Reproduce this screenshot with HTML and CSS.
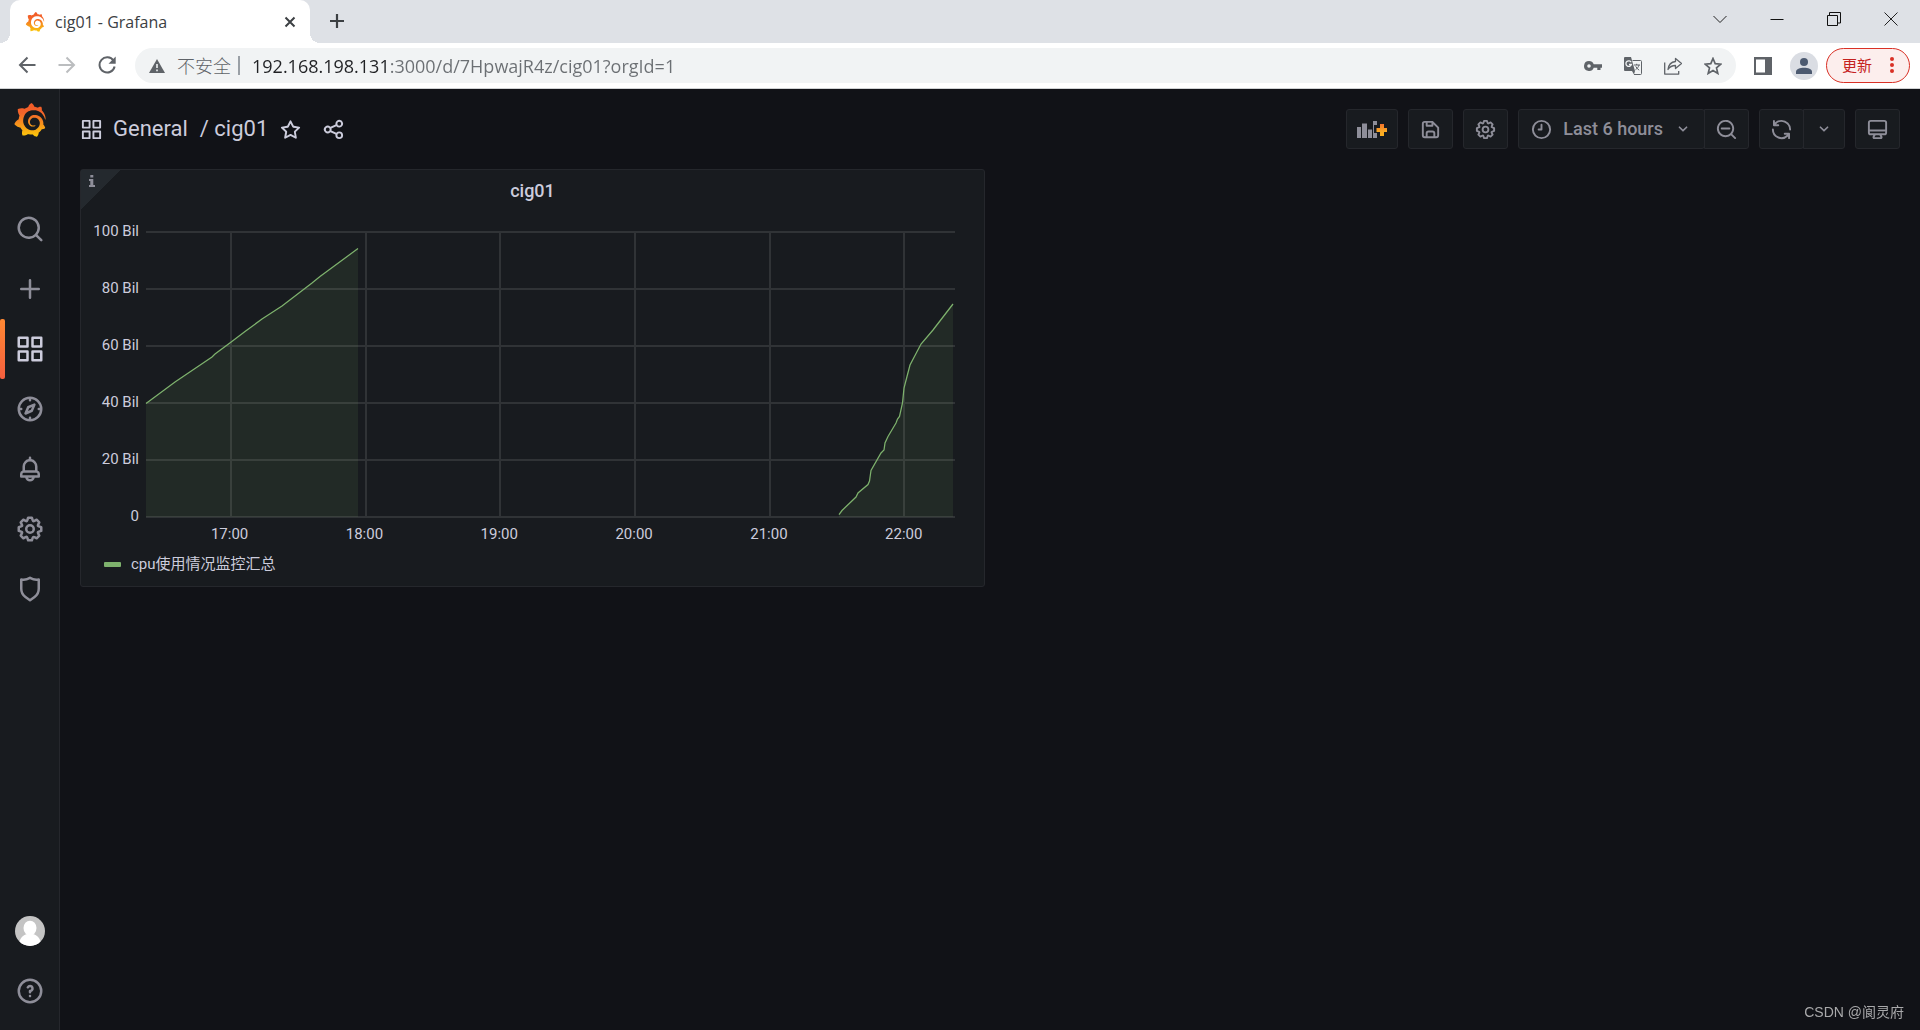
FILE: index.html
```html
<!DOCTYPE html>
<html lang="zh-CN">
<head>
<meta charset="utf-8">
<title>cig01 - Grafana</title>
<link rel="stylesheet" href="styles.css">
</head>
<body>
<svg class="defs" aria-hidden="true">
  <defs>
    <linearGradient id="brand" x1="0" y1="0" x2="0" y2="1">
      <stop offset="0" stop-color="#f05a28"/><stop offset=".3" stop-color="#f3642a"/><stop offset="1" stop-color="#fbca0a"/>
    </linearGradient>
    <symbol id="logo" viewBox="0 0 351 365"><path fill="url(#brand)" d="M342,161.2c-0.6-6.1-1.6-13.1-3.6-20.9c-2-7.7-5-16.2-9.4-25c-4.4-8.8-10.1-17.9-17.5-26.8c-2.9-3.5-6.1-6.9-9.5-10.2c5.1-20.3-6.2-37.9-6.2-37.9c-19.5-1.2-31.9,6.1-36.5,9.4c-0.8-0.3-1.5-0.7-2.3-1c-3.3-1.3-6.7-2.6-10.3-3.7c-3.5-1.1-7.1-2.1-10.8-3c-3.7-0.9-7.4-1.6-11.2-2.2c-0.7-0.1-1.3-0.2-2-0.3c-8.5-27.2-32.9-38.6-32.9-38.6c-27.3,17.3-32.4,41.5-32.4,41.5s-0.1,0.5-0.3,1.4c-1.5,0.4-3,0.9-4.5,1.3c-2.1,0.6-4.2,1.4-6.2,2.2c-2.1,0.8-4.1,1.6-6.2,2.5c-4.1,1.8-8.2,3.8-12.2,6c-3.9,2.2-7.7,4.6-11.4,7.1c-0.5-0.2-1-0.4-1-0.4c-37.8-14.4-71.3,2.9-71.3,2.9c-3.1,40.2,15.1,65.5,18.7,70.1c-0.9,2.5-1.7,5-2.5,7.5c-2.8,9.1-4.9,18.4-6.2,28.1c-0.2,1.4-0.4,2.8-0.5,4.2C18.8,192.7,8.5,228,8.5,228c29.1,33.5,63.1,35.6,63.1,35.6c0,0,0.1-0.1,0.1-0.1c4.3,7.7,9.3,15,14.9,21.9c2.4,2.9,4.8,5.6,7.4,8.3c-10.6,30.4,1.5,55.6,1.5,55.6c32.4,1.2,53.7-14.2,58.2-17.7c3.2,1.1,6.5,2.1,9.8,2.9c10,2.6,20.2,4.1,30.4,4.5c2.5,0.1,5.1,0.2,7.6,0.1l1.2,0l0.8,0l1.6,0l1.6-0.1l0,0.1c15.3,21.8,42.1,24.9,42.1,24.9c19.1-20.1,20.2-40.1,20.2-44.4l0,0c0,0,0-0.1,0-0.3c0-0.4,0-0.6,0-0.6l0,0c0-0.3,0-0.6,0-0.9c4-2.8,7.8-5.8,11.4-9.1c7.6-6.9,14.3-14.8,19.9-23.3c0.5-0.8,1-1.6,1.5-2.4c21.6,1.2,36.9-13.4,36.9-13.4c-3.6-22.5-16.4-33.5-19.1-35.6l0,0c0,0-0.1-0.1-0.3-0.2c-0.2-0.1-0.2-0.2-0.2-0.2c0,0,0,0,0,0c-0.1-0.1-0.3-0.2-0.5-0.3c0.1-1.4,0.2-2.7,0.3-4.1c0.2-2.4,0.2-4.9,0.2-7.3l0-1.8l0-0.9l0-0.5c0-0.6,0-0.4,0-0.6l-0.1-1.5l-0.1-2c0-0.7-0.1-1.3-0.2-1.9c-0.1-0.6-0.1-1.3-0.2-1.9l-0.2-1.9l-0.3-1.9c-0.4-2.5-0.8-4.9-1.4-7.4c-2.3-9.7-6.1-18.9-11-27.2c-5-8.3-11.2-15.6-18.3-21.8c-7-6.2-14.9-11.2-23.1-14.9c-8.3-3.7-16.9-6.1-25.5-7.2c-4.3-0.6-8.6-0.8-12.9-0.7l-1.6,0l-0.4,0c-0.1,0-0.6,0-0.5,0l-0.7,0l-1.6,0.1c-0.6,0-1.2,0.1-1.7,0.1c-2.2,0.2-4.4,0.5-6.5,0.9c-8.6,1.6-16.7,4.7-23.8,9c-7.1,4.3-13.3,9.6-18.3,15.6c-5,6-8.9,12.7-11.6,19.6c-2.7,6.9-4.2,14.1-4.6,21c-0.1,1.7-0.1,3.5-0.1,5.2c0,0.4,0,0.9,0,1.3l0.1,1.4c0.1,0.8,0.1,1.7,0.2,2.5c0.3,3.5,1,6.9,1.9,10.1c1.9,6.5,4.9,12.4,8.6,17.4c3.7,5,8.2,9.1,12.9,12.4c4.7,3.2,9.8,5.5,14.8,7c5,1.5,10,2.1,14.7,2.1c0.6,0,1.2,0,1.7,0c0.3,0,0.6,0,0.9,0c0.3,0,0.6,0,0.9-0.1c0.5,0,1-0.1,1.5-0.1c0.1,0,0.3,0,0.4-0.1l0.5-0.1c0.3,0,0.6-0.1,0.9-0.1c0.6-0.1,1.1-0.2,1.7-0.3c0.6-0.1,1.1-0.2,1.6-0.4c1.1-0.2,2.1-0.6,3.1-0.9c2-0.7,4-1.5,5.7-2.4c1.8-0.9,3.4-2,5-3c0.4-0.3,0.9-0.6,1.3-1c1.6-1.3,1.9-3.7,0.6-5.3c-1.1-1.4-3.1-1.8-4.7-0.9c-0.4,0.2-0.8,0.4-1.2,0.6c-1.4,0.7-2.8,1.3-4.3,1.8c-1.5,0.5-3.1,0.9-4.7,1.2c-0.8,0.1-1.6,0.2-2.5,0.3c-0.4,0-0.8,0.1-1.3,0.1c-0.4,0-0.9,0-1.2,0c-0.4,0-0.8,0-1.2,0c-0.5,0-1,0-1.5-0.1l-0.3,0l-0.3,0c-0.2,0-0.5,0-0.7-0.1c-0.5-0.1-0.9-0.1-1.4-0.2c-3.7-0.5-7.4-1.6-10.9-3.2c-3.6-1.6-7-3.8-10.1-6.6c-3.1-2.8-5.8-6.1-7.9-9.9c-2.1-3.8-3.6-8-4.3-12.4c-0.3-2.2-0.5-4.5-0.4-6.7c0-0.6,0.1-1.2,0.1-1.8l0-0.3l0-0.5c0-0.3,0.1-0.6,0.1-0.9c0.1-1.2,0.3-2.4,0.5-3.6c1.7-9.6,6.5-19,13.9-26.1c1.9-1.8,3.9-3.4,6-4.9c2.1-1.5,4.4-2.8,6.8-3.9c2.4-1.1,4.8-2,7.4-2.7c2.5-0.7,5.1-1.1,7.8-1.4c1.3-0.1,2.6-0.2,4-0.2c0.4,0,0.6,0,0.9,0l1.1,0l0.7,0l0.4,0l1.1,0.1c2.9,0.2,5.7,0.6,8.5,1.3c5.6,1.2,11.1,3.3,16.2,6.1c10.2,5.7,18.9,14.5,24.2,25.1c2.7,5.3,4.6,11,5.5,16.9c0.2,1.5,0.4,3,0.5,4.5l0.1,1.1l0.1,1.1c0,0.4,0,0.8,0,1.1c0,0.4,0,0.8,0,1.1l0,1l0,1.1c0,0.7-0.1,1.9-0.1,2.6c-0.1,1.6-0.3,3.3-0.5,4.9c-0.2,1.6-0.5,3.2-0.8,4.8c-0.3,1.6-0.7,3.2-1.1,4.7c-0.8,3.1-1.8,6.2-3,9.3c-2.4,6-5.6,11.8-9.4,17.1c-7.7,10.6-18.2,19.2-30.2,24.7c-6,2.7-12.3,4.7-18.8,5.7c-3.2,0.6-6.5,0.9-9.8,1l-0.6,0l-0.5,0l-1.1,0l-1.6,0l-0.8,0l-0.4,0c-1.8,0-3.5-0.1-5.3-0.3c-7-0.5-13.9-1.8-20.7-3.7c-6.7-1.9-13.2-4.6-19.4-7.8c-12.3-6.6-23.4-15.6-32-26.5c-4.3-5.4-8.1-11.3-11.2-17.4c-3.1-6.1-5.6-12.6-7.4-19.1c-1.8-6.6-2.9-13.3-3.4-20.1l-0.1-1.3l0-0.3l0-0.3l0-0.6l0-1.1l0-0.3l0-0.4l0-0.8l0-1.6l0-0.3l0-0.7c0-0.8,0-1.7,0-2.5c0.1-3.3,0.4-6.8,0.8-10.2c0.4-3.4,1-6.9,1.7-10.3c0.7-3.4,1.5-6.8,2.5-10.2c1.9-6.7,4.3-13.2,7.1-19.3c5.7-12.2,13.1-23.1,22-31.8c2.2-2.2,4.5-4.2,6.9-6.2c2.4-1.9,4.9-3.7,7.5-5.4c2.5-1.7,5.2-3.2,7.9-4.6c1.3-0.7,2.7-1.4,4.1-2c0.7-0.3,1.4-0.6,2.1-0.9c0.7-0.3,1.4-0.6,2.1-0.9c2.8-1.2,5.7-2.2,8.7-3.1c0.7-0.2,1.5-0.4,2.2-0.7c0.7-0.2,1.5-0.4,2.2-0.6c1.5-0.4,3-0.8,4.5-1.1c0.7-0.2,1.5-0.3,2.3-0.5c0.8-0.2,1.5-0.3,2.3-0.5c0.8-0.1,1.5-0.3,2.3-0.4l1.1-0.2l1.2-0.2c0.8-0.1,1.5-0.2,2.3-0.3c0.9-0.1,1.7-0.2,2.6-0.3c0.7-0.1,1.9-0.2,2.6-0.3c0.5-0.1,1.1-0.1,1.6-0.2l1.1-0.1l0.5-0.1l0.6,0c0.9-0.1,1.7-0.1,2.6-0.2l1.3-0.1l0.4,0l0.6,0c0.7,0,1.5-0.1,2.2-0.1c2.9-0.1,5.9-0.1,8.8,0c5.8,0.2,11.5,0.9,17,1.9c11.1,2.1,21.5,5.6,31,10.3c9.5,4.6,17.9,10.3,25.3,16.5c0.5,0.4,0.9,0.8,1.4,1.2c0.4,0.4,0.9,0.8,1.3,1.2c0.9,0.8,1.7,1.6,2.6,2.4c0.9,0.8,1.7,1.6,2.5,2.4c0.8,0.8,1.6,1.6,2.4,2.5c3.1,3.3,6,6.6,8.6,10c5.2,6.7,9.4,13.5,12.7,19.9c0.2,0.4,0.4,0.8,0.6,1.2c0.2,0.4,0.4,0.8,0.6,1.2c0.4,0.8,0.8,1.6,1.1,2.4c0.4,0.8,0.7,1.5,1.1,2.3c0.3,0.8,0.7,1.5,1,2.3c1.2,3,2.4,5.9,3.3,8.6c1.5,4.4,2.6,8.3,3.5,11.7c0.3,1.4,1.6,2.3,3,2.1c1.5-0.1,2.6-1.3,2.6-2.8C342.6,170.4,342.5,166.1,342,161.2z"/></symbol>
    <symbol id="apps" viewBox="0 0 24 24"><path d="M10,13H3a1,1,0,0,0-1,1v7a1,1,0,0,0,1,1h7a1,1,0,0,0,1-1V14A1,1,0,0,0,10,13ZM9,20H4V15H9ZM21,2H14a1,1,0,0,0-1,1v7a1,1,0,0,0,1,1h7a1,1,0,0,0,1-1V3A1,1,0,0,0,21,2ZM20,9H15V4h5Zm1,4H14a1,1,0,0,0-1,1v7a1,1,0,0,0,1,1h7a1,1,0,0,0,1-1V14A1,1,0,0,0,21,13Zm-1,7H15V15h5ZM10,2H3A1,1,0,0,0,2,3v7a1,1,0,0,0,1,1h7a1,1,0,0,0,1-1V3A1,1,0,0,0,10,2ZM9,9H4V4H9Z"/></symbol>
    <symbol id="cog" viewBox="0 0 24 24"><path d="M21.32,9.55l-1.89-.63.89-1.78A1,1,0,0,0,20.13,6L18,3.87a1,1,0,0,0-1.15-.19l-1.78.89-.63-1.89A1,1,0,0,0,13.5,2h-3a1,1,0,0,0-.95.68L8.92,4.57,7.14,3.68A1,1,0,0,0,6,3.87L3.87,6a1,1,0,0,0-.19,1.15l.89,1.78-1.89.63A1,1,0,0,0,2,10.5v3a1,1,0,0,0,.68.95l1.89.63-.89,1.78A1,1,0,0,0,3.87,18L6,20.13a1,1,0,0,0,1.15.19l1.78-.89.63,1.89a1,1,0,0,0,.95.68h3a1,1,0,0,0,.95-.68l.63-1.89,1.78.89A1,1,0,0,0,18,20.13L20.13,18a1,1,0,0,0,.19-1.15l-.89-1.78,1.89-.63A1,1,0,0,0,22,13.5v-3A1,1,0,0,0,21.32,9.55ZM20,12.78l-1.2.4A2,2,0,0,0,17.64,16l.57,1.14-1.1,1.1L16,17.64a2,2,0,0,0-2.79,1.16l-.4,1.2H11.22l-.4-1.2A2,2,0,0,0,8,17.64l-1.14.57-1.1-1.1L6.36,16A2,2,0,0,0,5.2,13.18L4,12.78V11.22l1.2-.4A2,2,0,0,0,6.36,8L5.79,6.89l1.1-1.1L8,6.36A2,2,0,0,0,10.82,5.2l.4-1.2h1.56l.4,1.2A2,2,0,0,0,16,6.36l1.14-.57,1.1,1.1L17.64,8a2,2,0,0,0,1.16,2.79l1.2.4ZM12,8a4,4,0,1,0,4,4A4,4,0,0,0,12,8Zm0,6a2,2,0,1,1,2-2A2,2,0,0,1,12,14Z"/></symbol>
    <symbol id="angle" viewBox="0 0 24 24"><path d="M17,9.17a1,1,0,0,0-1.41,0L12,12.71,8.46,9.17a1,1,0,0,0-1.41,0,1,1,0,0,0,0,1.42l4.24,4.24a1,1,0,0,0,1.42,0L17,10.59A1,1,0,0,0,17,9.17Z"/></symbol>
  </defs>
</svg>

<header class="browser">
  <div class="tabstrip">
    <div class="tab">
      <svg class="favicon"><use href="#logo"/></svg>
      <span class="tab-title">cig01 - Grafana</span>
      <button class="plain tab-close" aria-label="Close tab"><svg width="12" height="12" viewBox="0 0 12 12"><path d="M1.500 1.500l9 9M10.500 1.500l-9 9" fill="none" stroke="#3c4043" stroke-width="2"/></svg></button>
    </div>
    <button class="plain newtab" aria-label="New tab"><svg width="16" height="16" viewBox="0 0 16 16"><path d="M8 1v14M1 8h14" fill="none" stroke="#3c4043" stroke-width="2.200"/></svg></button>
    <div class="window-controls">
      <button class="plain" aria-label="Search tabs"><svg width="14" height="14" viewBox="0 0 14 14"><path d="M.500 4l6.500 6.500L13.500 4" fill="none" stroke="#222"/></svg></button>
      <button class="plain" aria-label="Minimize"><svg width="14" height="14" viewBox="0 0 14 14"><path d="M.500 7.500h13" stroke="#111"/></svg></button>
      <button class="plain" aria-label="Restore"><svg width="14" height="14" viewBox="0 0 14 14"><path d="M.500 3.500h10v10h-10zM2.500 3V.500h11v10.500H11" fill="none" stroke="#111"/></svg></button>
      <button class="plain" aria-label="Close"><svg width="14" height="14" viewBox="0 0 14 14"><path d="M.500.500l13 13M13.500.500l-13 13" fill="none" stroke="#222"/></svg></button>
    </div>
  </div>
  <div class="navbar">
    <div class="nav-buttons">
      <button class="plain" aria-label="Back"><svg width="18" height="18" viewBox="0 0 18 18"><path d="M17.500 9H2M9.500 1.500L2 9l7.500 7.500" fill="none" stroke="#5f6368" stroke-width="2"/></svg></button>
      <button class="plain" aria-label="Forward"><svg width="18" height="18" viewBox="0 0 18 18"><path d="M.500 9H16M8.500 1.500L16 9l-7.500 7.500" fill="none" stroke="#bbbdbf" stroke-width="2"/></svg></button>
      <button class="plain" aria-label="Reload"><svg width="18" height="18" viewBox="0 0 18 18"><path d="M15.500 4.700A7.600 7.600 0 1 0 16.600 10.500" fill="none" stroke="#5f6368" stroke-width="2"/><path d="M17.700.500v7.200h-7.200z" fill="#5f6368"/></svg></button>
    </div>
    <div class="omnibox">
      <svg class="warn" width="16" height="14" viewBox="0 0 16 14"><path d="M8 0l8 14H0z" fill="#5f6368"/><path d="M8 5v4M8 10.500v1.700" stroke="#f1f3f4" stroke-width="1.600"/></svg>
      <label class="insecure" for="url">不安全</label>
      <span class="divider"></span>
      <input class="url" id="url" type="text" value="192.168.198.131:3000/d/7HpwajR4z/cig01?orgId=1">
      <button class="plain omni-btn" aria-label="Passwords"><svg width="18" height="12" viewBox="0 0 18 12"><path fill="#5f6368" fill-rule="evenodd" d="M5 1a5 5 0 0 1 4.700 3.200H18v3.600h-1.500V10h-3.200V7.800H9.700A5 5 0 1 1 5 1zm0 3.200a1.800 1.800 0 1 0 0 3.600 1.800 1.800 0 0 0 0-3.600z"/></svg></button>
      <button class="plain omni-btn" aria-label="Translate"><svg width="18" height="18" viewBox="0 0 18 18"><path d="M8.500 3.500h8a1 1 0 0 1 1 1v12a1 1 0 0 1-1 1h-6.500" fill="#f1f3f4" stroke="#5f6368"/><path d="M1 0h6l4 14H1a1 1 0 0 1-1-1V1a1 1 0 0 1 1-1z" fill="#5f6368"/><path d="M8 14l2 3.500 1-3.500z" fill="#5f6368"/><path d="M7.200 5.300A2.800 2.800 0 1 0 7.400 7.500H5" fill="none" stroke="#f1f3f4" stroke-width="1.300"/><path d="M10 8h6M12.700 6.800V8M15 8c-.5 2-1.800 3.600-3.500 4.700M11.700 9.300c.7 1.500 2 2.900 3.500 3.900" fill="none" stroke="#5f6368"/></svg></button>
      <button class="plain omni-btn" aria-label="Share"><svg width="18" height="18" viewBox="0 0 18 18"><path d="M.700 5.500v11.600h14v-3M11.500 1.500l6 5-6 5V8.500C8 8.500 5.500 10 4 12.500 4.500 8 7.500 5 11.500 4.500z" fill="none" stroke="#5f6368" stroke-width="1.300" stroke-linejoin="round"/></svg></button>
      <button class="plain omni-btn" aria-label="Bookmark"><svg width="18" height="18" viewBox="0 0 18 18"><path d="M9 1.500l2.200 5.200 5.600.5-4.300 3.700 1.300 5.500L9 13.500l-4.800 2.900 1.300-5.500L1.200 7.200l5.600-.5z" fill="none" stroke="#5f6368" stroke-width="1.700"/></svg></button>
    </div>
    <button class="plain side-panel" aria-label="Side panel"><svg width="18" height="18" viewBox="0 0 18 18"><path fill="#5f6368" fill-rule="evenodd" d="M0 0h18v18H0zM2 2.500v13h9v-13z"/></svg></button>
    <button class="plain profile" aria-label="Profile"><svg width="16" height="16" viewBox="0 0 16 16"><g fill="#4c5a70"><circle cx="8" cy="4" r="4"/><path d="M0 16v-2.500C0 11 4 9.700 8 9.700s8 1.300 8 3.800V16z"/></g></svg></button>
    <button class="update">更新<svg width="4" height="16" viewBox="0 0 4 16"><g fill="#d93025"><circle cx="2" cy="2" r="2"/><circle cx="2" cy="8" r="2"/><circle cx="2" cy="14" r="2"/></g></svg></button>
  </div>
</header>

<div class="app">
  <nav class="sidebar">
    <a class="brand" href="#" aria-label="Home"><svg><use href="#logo"/></svg></a>
    <a class="side-item" href="#" aria-label="Search"><svg viewBox="0 0 24 24"><path d="M21.71,20.29,18,16.61A9,9,0,1,0,16.61,18l3.68,3.68a1,1,0,0,0,1.42,0A1,1,0,0,0,21.71,20.29ZM11,18a7,7,0,1,1,7-7A7,7,0,0,1,11,18Z"/></svg></a>
    <a class="side-item" href="#" aria-label="Create"><svg viewBox="0 0 24 24"><path d="M19,11H13V5a1,1,0,0,0-2,0v6H5a1,1,0,0,0,0,2h6v6a1,1,0,0,0,2,0V13h6a1,1,0,0,0,0-2Z"/></svg></a>
    <a class="side-item active" href="#" aria-label="Dashboards"><svg><use href="#apps"/></svg></a>
    <a class="side-item" href="#" aria-label="Explore"><svg viewBox="0 0 24 24"><path d="M12,2A10,10,0,1,0,22,12,10,10,0,0,0,12,2Zm1,17.93V19a1,1,0,0,0-2,0v.93A8,8,0,0,1,4.070,13H5a1,1,0,0,0,0-2H4.070A8,8,0,0,1,11,4.070V5a1,1,0,0,0,2,0V4.070A8,8,0,0,1,19.930,11H19a1,1,0,0,0,0,2h.93A8,8,0,0,1,13,19.930ZM15.140,7.550l-5,2.120a1,1,0,0,0-.52.52l-2.120,5a1,1,0,0,0,.21,1.100,1,1,0,0,0,.7.3.93.93,0,0,0,.4-.09l5-2.120a1,1,0,0,0,.52-.52l2.120-5a1,1,0,0,0-1.310-1.310Zm-2.490,5.100-2.280,1,1-2.280,2.280-1Z"/></svg></a>
    <a class="side-item" href="#" aria-label="Alerting"><svg viewBox="0 0 24 24"><path d="M18,13.18V10a6,6,0,0,0-5-5.910V3a1,1,0,0,0-2,0V4.090A6,6,0,0,0,6,10v3.180A3,3,0,0,0,4,16v2a1,1,0,0,0,1,1H8.140a4,4,0,0,0,7.720,0H19a1,1,0,0,0,1-1V16A3,3,0,0,0,18,13.180ZM8,10a4,4,0,0,1,8,0v3H8Zm4,10a2,2,0,0,1-1.720-1h3.440A2,2,0,0,1,12,20Zm6-3H6V16a1,1,0,0,1,1-1H17a1,1,0,0,1,1,1Z"/></svg></a>
    <a class="side-item" href="#" aria-label="Configuration"><svg><use href="#cog"/></svg></a>
    <a class="side-item" href="#" aria-label="Server admin"><svg viewBox="0 0 24 24"><path d="M19.630,3.650a1,1,0,0,0-.84-.2,8,8,0,0,1-6.220-1.270,1,1,0,0,0-1.140,0A8,8,0,0,1,5.210,3.450a1,1,0,0,0-.84.2A1,1,0,0,0,4,4.430v7.450a9,9,0,0,0,3.770,7.330l3.650,2.600a1,1,0,0,0,1.160,0l3.650-2.600A9,9,0,0,0,20,11.880V4.430A1,1,0,0,0,19.630,3.650ZM18,11.880a7,7,0,0,1-2.930,5.700L12,19.770,8.930,17.580A7,7,0,0,1,6,11.880V5.580a10,10,0,0,0,6-1.390,10,10,0,0,0,6,1.390Z"/></svg></a>
    <span class="side-spacer"></span>
    <a class="side-item" href="#" aria-label="Account"><svg viewBox="0 0 30 30"><clipPath id="round"><circle cx="15" cy="15" r="15"/></clipPath><g clip-path="url(#round)"><path d="M0 0h30v30H0z" fill="#c4c4c4"/><g fill="#fff"><ellipse cx="15" cy="12" rx="6.500" ry="7.300"/><path d="M4 30c0-8 4-11 8-12h6c4 1 8 4 8 12z"/></g></g></svg></a>
    <a class="side-item" href="#" aria-label="Help"><svg viewBox="0 0 24 24"><path d="M11.290,15.290a1.580,1.580,0,0,0-.12.15.76.76,0,0,0-.09.18.64.64,0,0,0-.06.18,1.360,1.360,0,0,0,0,.2.84.84,0,0,0,.08.38.9.9,0,0,0,.54.54.94.94,0,0,0,.76,0,.9.9,0,0,0,.54-.54A1,1,0,0,0,13,16a1,1,0,0,0-.29-.71A1,1,0,0,0,11.290,15.290ZM12,2A10,10,0,1,0,22,12,10,10,0,0,0,12,2Zm0,18a8,8,0,1,1,8-8A8,8,0,0,1,12,20ZM12,7A3,3,0,0,0,9.400,8.500a1,1,0,1,0,1.730,1A1,1,0,0,1,12,9a1,1,0,0,1,0,2,1,1,0,0,0-1,1v1a1,1,0,0,0,2,0v-.18A3,3,0,0,0,12,7Z"/></svg></a>
  </nav>

  <main class="main">
    <div class="toolbar">
      <div class="crumbs">
        <svg class="icon"><use href="#apps"/></svg>
        <a class="crumb folder" href="#">General</a>
        <a class="crumb" href="#">/ cig01</a>
        <button class="plain crumb-btn" aria-label="Mark as favorite"><svg class="icon" viewBox="0 0 24 24"><path d="M22,9.670A1,1,0,0,0,21.140,9l-5.690-.83L12.900,3a1,1,0,0,0-1.800,0L8.550,8.160,2.860,9a1,1,0,0,0-.81.68,1,1,0,0,0,.25,1l4.130,4-1,5.680A1,1,0,0,0,6.900,21.440L12,18.770l5.100,2.670a.93.93,0,0,0,.46.12,1,1,0,0,0,.59-.19,1,1,0,0,0,.4-1l-1-5.680,4.130-4A1,1,0,0,0,22,9.670Zm-6.150,4a1,1,0,0,0-.29.88l.72,4.200-3.760-2a1.060,1.060,0,0,0-.94,0l-3.760,2,.72-4.200a1,1,0,0,0-.29-.88l-3-3,4.210-.61a1,1,0,0,0,.76-.55L12,5.700l1.880,3.820a1,1,0,0,0,.76.55l4.210.61Z"/></svg></button>
        <button class="plain crumb-btn" aria-label="Share dashboard"><svg class="icon" viewBox="0 0 24 24"><path d="M18,14a4,4,0,0,0-3.080,1.480l-5.100-2.350a3.640,3.640,0,0,0,0-2.260l5.100-2.350A4,4,0,1,0,14,6a4.170,4.170,0,0,0,.07.71L8.790,9.140a4,4,0,1,0,0,5.720l5.280,2.430A4.170,4.170,0,0,0,14,18a4,4,0,1,0,4-4ZM18,4a2,2,0,1,1-2,2A2,2,0,0,1,18,4ZM6,14a2,2,0,1,1,2-2A2,2,0,0,1,6,14Zm12,6a2,2,0,1,1,2-2A2,2,0,0,1,18,20Z"/></svg></button>
      </div>
      <div class="actions">
        <button class="tool wide" aria-label="Add panel"><svg width="30" height="17" viewBox="0 0 30 17"><path d="M0 6h4v11H0zM5 2.500h5V17H5zM11 8.500h4V17h-4zM16 0h4v4h-3v8h3v5h-4z"/><path d="M23 3h4v4h3.500v4H27v4h-4v-4h-3.500V7H23z" fill="url(#plus)"/><linearGradient id="plus" x1="0" y1="0" x2="0" y2="1"><stop offset="0" stop-color="#f5742c"/><stop offset=".6" stop-color="#f9a825"/><stop offset="1" stop-color="#fbb01e"/></linearGradient></svg></button>
        <button class="tool" aria-label="Save dashboard"><svg class="icon" viewBox="0 0 24 24"><path d="M20.710,9.290l-6-6a1,1,0,0,0-.32-.21A1.090,1.090,0,0,0,14,3H6A3,3,0,0,0,3,6V18a3,3,0,0,0,3,3H18a3,3,0,0,0,3-3V10A1,1,0,0,0,20.710,9.290ZM9,5h4V7H9Zm6,14H9V16a1,1,0,0,1,1-1h4a1,1,0,0,1,1,1Zm4-1a1,1,0,0,1-1,1H17V16a3,3,0,0,0-3-3H10a3,3,0,0,0-3,3v3H6a1,1,0,0,1-1-1V6A1,1,0,0,1,6,5H7V8A1,1,0,0,0,8,9h6a1,1,0,0,0,1-1V6.410l4,4Z"/></svg></button>
        <button class="tool" aria-label="Dashboard settings"><svg class="icon"><use href="#cog"/></svg></button>
        <div class="group">
          <button class="tool time"><svg class="icon" viewBox="0 0 24 24"><g fill="none" stroke="currentColor" stroke-width="2" stroke-linecap="round" stroke-linejoin="round"><circle cx="12" cy="12" r="9"/><path d="M12 7v5H9"/></g></svg><span>Last 6 hours</span><svg class="chevron"><use href="#angle"/></svg></button>
          <button class="tool" aria-label="Zoom out"><svg class="icon" viewBox="0 0 24 24"><path d="M21.710,20.290,18,16.610A9,9,0,1,0,16.610,18l3.680,3.680a1,1,0,0,0,1.420,0A1,1,0,0,0,21.710,20.290ZM11,18a7,7,0,1,1,7-7A7,7,0,0,1,11,18Zm4-8H7a1,1,0,0,0,0,2h8a1,1,0,0,0,0-2Z"/></svg></button>
        </div>
        <div class="group">
          <button class="tool" aria-label="Refresh"><svg class="icon" viewBox="0 0 24 24"><path d="M19.910,15.510H15.380a1,1,0,0,0,0,2h2.400A8,8,0,0,1,4,12a1,1,0,1,0-2,0,10,10,0,0,0,16.880,7.230V21a1,1,0,0,0,2,0V16.500A1,1,0,0,0,19.910,15.510ZM12,2A10,10,0,0,0,5.120,4.770V3a1,1,0,0,0-2,0V7.500a1,1,0,0,0,1,1h4.500a1,1,0,0,0,0-2H6.220A8,8,0,0,1,20,12a1,1,0,0,0,2,0A10,10,0,0,0,12,2Z"/></svg></button>
          <button class="tool narrow" aria-label="Refresh interval"><svg class="chevron"><use href="#angle"/></svg></button>
        </div>
        <button class="tool" aria-label="Cycle view mode"><svg class="icon" viewBox="0 0 24 24"><path d="M19,2H5A3,3,0,0,0,2,5V15a3,3,0,0,0,3,3H7.640l-.58,1a2,2,0,0,0,0,2,2,2,0,0,0,1.750,1h6.460A2,2,0,0,0,17,21a2,2,0,0,0,0-2l-.59-1H19a3,3,0,0,0,3-3V5A3,3,0,0,0,19,2ZM8.770,20,10,18H14l1.200,2ZM20,15a1,1,0,0,1-1,1H5a1,1,0,0,1-1-1V14H20Zm0-3H4V5A1,1,0,0,1,5,4H19a1,1,0,0,1,1,1Z"/></svg></button>
      </div>
    </div>

    <div class="dashboard">
      <section class="panel">
        <span class="info"><svg width="8" height="12" viewBox="0 0 8 12"><path d="M2.300 0h3v2.500h-3zM1 4h4.300v6H7v2H1v-2h1.300V6H1z"/></svg></span>
        <h2 class="panel-title">cig01</h2>
        <div class="chart">
          <div class="y-axis"><span>100 Bil</span><span>80 Bil</span><span>60 Bil</span><span>40 Bil</span><span>20 Bil</span><span>0</span></div>
          <div class="plot-area">
            <svg class="plot" viewBox="0 0 809 286" preserveAspectRatio="none">
              <path class="area" d="M0 172.500L29 151 66 126 69 123 84.500 111.500 99 100.500 116 88 136 75 166 52 174 45.500 212 17.500V286H0z"/>
              <path class="area" d="M693 283.500L696 279.500 710 266 712 262 722 253.500 723.500 250 725 239.500 735 222 738 219 739 212 742 205.500 750 192 751.500 188 753.500 185.500 756.500 172 758 157 761 145.500 764 134 775 113 787 99 807 73V286H693z"/>
              <path class="grid" d="M0 1h809M0 58h809M0 115h809M0 172h809M0 229h809M0 286h809M85 0v285M220 0v285M354 0v285M489 0v285M624 0v285M758 0v285"/>
              <path class="line" d="M0 172.500L29 151 66 126 69 123 84.500 111.500 99 100.500 116 88 136 75 166 52 174 45.500 212 17.500M693 283.500L696 279.500 710 266 712 262 722 253.500 723.500 250 725 239.500 735 222 738 219 739 212 742 205.500 750 192 751.500 188 753.500 185.500 756.500 172 758 157 761 145.500 764 134 775 113 787 99 807 73"/>
            </svg>
            <div class="x-axis"><span>17:00</span><span>18:00</span><span>19:00</span><span>20:00</span><span>21:00</span><span>22:00</span></div>
          </div>
        </div>
        <button class="plain legend"><span class="swatch"></span>cpu使用情况监控汇总</button>
      </section>
    </div>
  </main>
</div>
<div class="watermark">CSDN @阆灵府</div>
</body>
</html>
```
FILE: styles.css
```css
* { box-sizing: border-box; }

body {
  margin: 0;
  min-height: 100vh;
  display: flex;
  flex-direction: column;
  background: #111217;
  color: #ccccdc;
  font: 15px/18px Roboto, "Noto Sans CJK SC", sans-serif;
}

svg { display: block; fill: currentColor; }
a { color: inherit; text-decoration: none; }
.defs { position: absolute; width: 0; height: 0; }

.plain {
  display: flex;
  align-items: center;
  justify-content: center;
  padding: 0;
  border: 0;
  background: none;
  color: inherit;
  font: inherit;
}

/* Browser window */
.browser {
  border-bottom: 1px solid #d0d2d4;
  background: #fff;
  color: #3c4043;
  font-family: "Open Sans", "Noto Sans CJK SC", sans-serif;
}

.tabstrip { display: flex; height: 43px; padding-left: 10px; background: #dee1e6; }

.tab {
  position: relative;
  display: flex;
  align-items: center;
  gap: 10px;
  width: 300px;
  padding: 0 13px 0 15px;
  border-radius: 10px 10px 0 0;
  background: #fff;
}
.tab::before, .tab::after {
  content: "";
  position: absolute;
  bottom: 0;
  width: 10px;
  height: 10px;
}
.tab::before { right: 100%; background: radial-gradient(circle at 0 0, #dee1e6 10px, #fff 10px); }
.tab::after { left: 100%; background: radial-gradient(circle at 100% 0, #dee1e6 10px, #fff 10px); }
.favicon { width: 20px; height: 20px; }
.tab-title { flex: 1; font-size: 16px; }
.newtab { width: 54px; padding-bottom: 2px; }
.tab-close { padding-right: 1px; }
.window-controls { display: flex; margin: 0 1px 0 auto; padding-bottom: 6px; }
.window-controls .plain { width: 57px; }

.navbar { display: flex; align-items: center; height: 45px; padding: 0 10px 4px 7px; }
.nav-buttons { display: flex; margin: 3px 8px 0 0; }
.nav-buttons .plain { width: 40px; }

.omnibox {
  flex: 1;
  display: flex;
  align-items: center;
  height: 35px;
  margin-top: 4px;
  padding: 0 3px 0 14px;
  border-radius: 18px;
  background: #f1f3f4;
}
.insecure { margin-left: 12px; color: #5f6368; font-size: 18px; font-weight: 300; }
.divider { width: 2px; height: 19px; margin: 0 12px 0 7px; background: #9aa0a6; }
/* Host part dark, path part grey */
.url {
  flex: 1;
  min-width: 0;
  padding: 0;
  border: 0;
  outline: 0;
  background: linear-gradient(90deg, #202124 139px, #6b6f73 139px);
  background-clip: text;
  color: transparent;
  font: 18px/24px "Open Sans", sans-serif;
}
.omni-btn { width: 40px; }
.side-panel { width: 54px; margin-top: 4px; }
.profile { width: 28px; height: 28px; margin-top: 4px; border-radius: 50%; background: #dadde3; }
.update {
  display: flex;
  align-items: center;
  gap: 18px;
  width: 84px;
  height: 35px;
  margin: 4px 0 0 8px;
  padding: 0 0 1px 15px;
  border: 1px solid #d93025;
  border-radius: 18px;
  background: #fceeed;
  color: #c5221f;
  font: 15px/18px "Noto Sans CJK SC", sans-serif;
}

/* Application */
.app { flex: 1; display: flex; }

.sidebar {
  display: flex;
  flex-direction: column;
  width: 60px;
  padding-bottom: 9px;
  border-right: 1px solid #25272c;
  background: #181b1f;
  color: #8e8e99;
}
.brand { display: flex; justify-content: center; height: 110px; padding-top: 14px; }
.brand svg { width: 34px; height: 34px; }
.side-item { position: relative; display: flex; align-items: center; justify-content: center; height: 60px; }
.side-item svg { width: 30px; height: 30px; }
.side-item.active { color: #ccccdc; }
.side-item.active::before {
  content: "";
  position: absolute;
  left: 0;
  top: 0;
  width: 5px;
  height: 60px;
  border-radius: 2px;
  background: linear-gradient(#ff8833, #f55f3e);
}
.side-spacer { flex: 1; }

.main { flex: 1; min-width: 0; padding: 20px; }

.toolbar { display: flex; align-items: center; justify-content: space-between; height: 40px; margin-bottom: 20px; }
.icon { width: 23px; height: 23px; }
.chevron { width: 20px; height: 20px; }
.crumbs { display: flex; align-items: center; font-size: 22px; line-height: 28px; }
.folder { margin: 0 12px 0 10px; }
.crumb-btn { margin-left: 11px; width: 23px; }
.crumb-btn + .crumb-btn { margin-left: 20px; }

.actions, .group { display: flex; }
.actions { gap: 10px; }
.tool {
  display: flex;
  align-items: center;
  justify-content: center;
  width: 45px;
  height: 40px;
  padding: 0;
  border: 1px solid #25272c;
  border-radius: 3px;
  background: #181b1f;
  color: #8e8e99;
  font: 500 18px/24px Roboto, sans-serif;
}
.tool.wide { width: 52px; }
.tool.narrow { width: 42px; }
.tool.time { width: auto; gap: 10px; padding: 0 11px; }
.group .tool + .tool { margin-left: -1px; border-radius: 0 3px 3px 0; }

.dashboard { display: grid; grid-template-columns: repeat(2, 1fr); gap: 10px; }

.panel {
  position: relative;
  padding: 0 29px 13px 6px;
  border: 1px solid #25272c;
  border-radius: 3px;
  background: #181b1f;
}
.info {
  position: absolute;
  left: 0;
  top: 0;
  width: 40px;
  height: 40px;
  padding: 5px 0 0 7px;
  background: linear-gradient(135deg, #24292e 50%, transparent 50%);
  color: #8e8e99;
}
.panel-title {
  margin: 0 -23px 0 0;
  padding: 8px 0;
  text-align: center;
  font: 500 18px/26px Roboto, sans-serif;
}
.chart { display: flex; gap: 7px; margin-top: 10px; }
.y-axis {
  display: flex;
  flex-direction: column;
  justify-content: space-between;
  width: 52px;
  height: 303px;
  text-align: right;
}
.plot-area { flex: 1; min-width: 0; padding-top: 9px; }
.plot { width: 100%; height: 286px; overflow: visible; }
.area { fill: #7eb26d; fill-opacity: 0.1; }
.grid { fill: none; stroke: #c8c8c8; stroke-opacity: 0.14; stroke-width: 2; }
.line { fill: none; stroke: #7eb26d; stroke-width: 1.25; }
.x-axis {
  display: grid;
  grid-template-columns: repeat(6, 1fr);
  margin: 8px -2% 0 2%;
  text-align: center;
}
.legend { gap: 10px; margin: 12px 0 0 17px; line-height: 18px; }
.swatch { width: 17px; height: 5px; border-radius: 1px; background: #7eb26d; }

.watermark {
  position: fixed;
  right: 16px;
  bottom: 9px;
  color: #a9a9ab;
  font: 14px/18px "Liberation Sans", "Noto Sans CJK SC", sans-serif;
}
```
